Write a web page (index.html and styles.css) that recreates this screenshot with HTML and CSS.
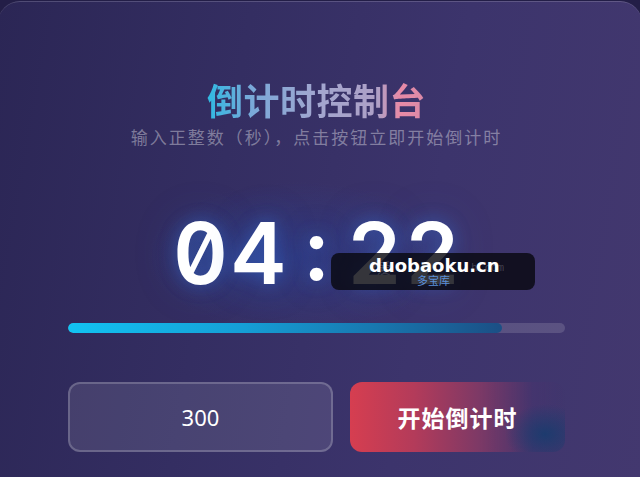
FILE: index.html
```html
<!DOCTYPE html>
<html lang="zh-CN">
<head>
<meta charset="utf-8">
<title>倒计时控制台</title>
<link rel="stylesheet" href="styles.css">
</head>
<body>
<main class="card">
  <h1 class="title">倒计时控制台</h1>
  <p class="subtitle">输入正整数（秒），点击按钮立即开始倒计时</p>
  <div class="timer"><span class="digit">0</span><span class="digit">4</span><span class="digit colon">:</span><span class="digit">2</span><span class="digit">2</span></div>
  <div class="track"><div class="fill" style="width: 87.3%"></div></div>
  <div class="controls">
    <div class="input">300</div>
    <button class="start">开始倒计时</button>
  </div>
  <div class="watermark">
    <span class="wm-ghost wm-ghost-left">爱</span>
    <span class="wm-ghost wm-ghost-right">h.com</span>
    <span class="wm-main">duobaoku.cn</span>
    <span class="wm-sub">多宝库</span>
  </div>
</main>
</body>
</html>
```

FILE: styles.css
```css
html, body {
  margin: 0;
  padding: 0;
  width: 640px;
  height: 477px;
  overflow: hidden;
  background: #231e47;
}

.card {
  position: relative;
  box-sizing: border-box;
  width: 644px;
  height: 480px;
  margin: 1px 0 0 -2px;
  padding: 75px 77px 0 70px;
  border-top: 1px solid rgba(255, 255, 255, 0.16);
  border-radius: 22px 22px 0 0;
  background:
    radial-gradient(ellipse 200px 100px at 300px 255px, rgba(40, 70, 160, 0.4), rgba(40, 70, 160, 0) 75%),
    linear-gradient(100deg, #2b2655 0%, #342e62 35%, #3c346c 65%, #43386f 100%);
  font-family: "Noto Sans CJK SC", "Noto Sans", sans-serif;
  display: flex;
  flex-direction: column;
  align-items: stretch;
}

.title {
  margin: 0;
  font-size: 36px;
  line-height: 44px;
  font-weight: 700;
  letter-spacing: 0.5px;
  text-align: center;
  align-self: center;
  background: linear-gradient(90deg, #2fb9e2 0%, #79a9d9 20%, #a2a6cf 50%, #aea0c6 78%, #e88aa6 88%, #d98aa8 100%);
  -webkit-background-clip: text;
  background-clip: text;
  color: transparent;
}

.subtitle {
  margin: 4px 0 0;
  font-size: 17px;
  line-height: 24px;
  letter-spacing: 2px;
  text-align: center;
  color: rgba(255, 255, 255, 0.38);
}

.timer {
  margin-top: 55px;
  height: 100px;
  display: flex;
  justify-content: center;
  align-items: center;
  font-family: "Inter", "DejaVu Sans", sans-serif;
  font-feature-settings: "tnum" 1, "zero" 1;
  font-size: 85px;
  line-height: 100px;
  font-weight: 600;
  color: #ffffff;
  text-shadow: 0 0 18px rgba(60, 140, 255, 0.38), 0 0 44px rgba(40, 100, 220, 0.28);
}

.digit {
  width: 58px;
  text-align: center;
}

.colon {
  position: relative;
  top: -4px;
}

.track {
  margin-top: 19px;
  height: 10px;
  border-radius: 5px;
  background: rgba(255, 255, 255, 0.14);
  overflow: hidden;
}

.fill {
  height: 100%;
  border-radius: 5px;
  background: linear-gradient(90deg, #12c3f2 0%, #159fd6 40%, #1878b0 70%, #1b4f85 100%);
}

.controls {
  margin-top: 49px;
  display: flex;
  gap: 17px;
  height: 70px;
}

.input {
  flex: 1;
  box-sizing: border-box;
  display: flex;
  align-items: center;
  justify-content: center;
  border: 2px solid rgba(255, 255, 255, 0.2);
  border-radius: 12px;
  background: rgba(255, 255, 255, 0.1);
  color: #ffffff;
  font-family: "Noto Sans", sans-serif;
  font-size: 22px;
}

.start {
  width: 215px;
  border: 0;
  border-radius: 12px;
  padding: 0;
  background:
    radial-gradient(ellipse 40px 30px at 195px 52px, rgba(25, 60, 110, 0.9), rgba(25, 60, 110, 0) 100%),
    linear-gradient(90deg, #d63e50 0%, #b33b5a 30%, #7d3966 60%, rgba(70, 52, 110, 0.7) 85%, rgba(70, 52, 110, 0) 100%);
  color: #ffffff;
  font-family: "Noto Sans CJK SC", sans-serif;
  font-size: 23px;
  font-weight: 700;
  letter-spacing: 1px;
}

.watermark {
  position: absolute;
  left: 333px;
  top: 251px;
  width: 204px;
  height: 37px;
  border-radius: 8px;
  background: rgba(8, 8, 16, 0.82);
}

.wm-ghost {
  position: absolute;
  color: rgba(255, 255, 255, 0.2);
  font-family: "DejaVu Sans Mono", monospace;
}

.wm-ghost-left {
  left: 46px;
  top: 4px;
  font-family: "Noto Sans CJK SC", sans-serif;
  font-size: 14px;
  line-height: 20px;
}

.wm-ghost-right {
  left: 140px;
  top: 8px;
  font-size: 11px;
  line-height: 14px;
}

.wm-main {
  position: absolute;
  left: 38px;
  top: 2px;
  font-family: "DejaVu Sans", sans-serif;
  font-weight: 700;
  font-size: 18px;
  line-height: 22px;
  color: #ffffff;
}

.wm-sub {
  position: absolute;
  left: 86px;
  top: 21px;
  font-family: "Noto Sans CJK SC", sans-serif;
  font-size: 11px;
  line-height: 13px;
  color: #5b8fd8;
}
```
